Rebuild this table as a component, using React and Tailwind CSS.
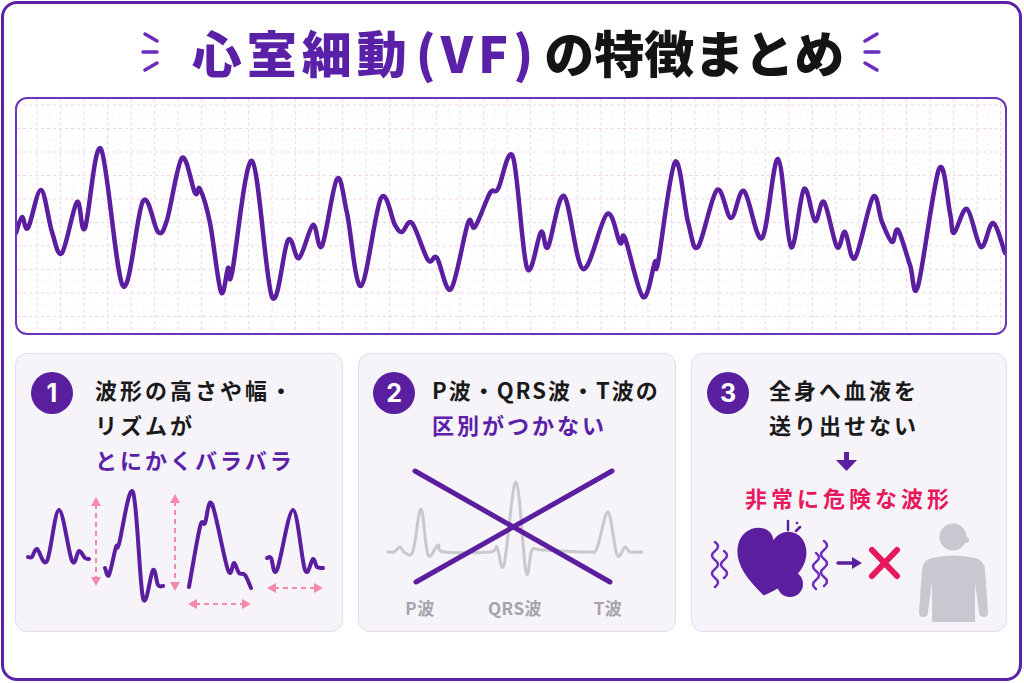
import React from "react";

const PINK = "#f28bab";
const RED = "#e8185c";

function smooth(pts, k = 1) {
  let d = `M${pts[0][0]},${pts[0][1]}`;
  for (let i = 0; i < pts.length - 1; i++) {
    const p0 = pts[i - 1] || pts[i];
    const p1 = pts[i];
    const p2 = pts[i + 1];
    const p3 = pts[i + 2] || p2;
    const c1x = p1[0] + ((p2[0] - p0[0]) / 6) * k;
    const c1y = p1[1] + ((p2[1] - p0[1]) / 6) * k;
    const c2x = p2[0] - ((p3[0] - p1[0]) / 6) * k;
    const c2y = p2[1] - ((p3[1] - p1[1]) / 6) * k;
    d += ` C${c1x.toFixed(1)},${c1y.toFixed(1)} ${c2x.toFixed(1)},${c2y.toFixed(1)} ${p2[0]},${p2[1]}`;
  }
  return d;
}

const ECG = [
  [16, 233], [22, 217], [28, 228], [41, 190], [52, 232], [62, 253], [77, 202], [85, 228], [101, 149], [123, 286],
  [143, 201], [158, 232], [167, 220], [182, 158], [195, 193], [200, 189], [210, 223], [221, 292], [228, 268], [232, 273],
  [252, 161], [272, 297], [288, 240], [299, 258], [313, 225], [322, 246], [337, 179], [347, 213], [361, 286], [381, 198],
  [395, 225], [402, 232], [412, 223], [428, 260], [437, 258], [451, 289], [468, 223], [475, 227], [490, 193], [498, 189],
  [513, 157], [527, 268], [541, 232], [548, 247], [564, 196], [583, 269], [607, 214], [620, 243], [625, 238], [643, 297],
  [655, 262], [658, 263], [675, 162], [688, 222], [698, 247], [717, 190], [731, 218], [744, 191], [762, 238], [778, 159],
  [791, 247], [804, 189], [815, 221], [824, 202], [837, 247], [845, 232], [855, 258], [873, 197], [882, 222], [892, 242],
  [898, 230], [910, 265], [918, 286], [939, 169], [950, 213], [954, 233], [967, 209], [981, 247], [993, 223], [1005, 253],
];

const W1 = [[28, 557], [32, 557], [37, 549], [47, 561], [59, 510], [72, 561], [79, 551], [85, 558], [89, 559]];
const W2 = [[105, 568], [109, 575], [116, 547], [119, 544], [133, 492], [143, 598], [153, 570], [158, 585], [163, 586]];
const W3 = [[189, 587], [200, 527], [205, 523], [212, 504], [228, 570], [234, 563], [239, 573], [245, 575], [251, 588]];
const W4 = [[267, 558], [271, 558], [277, 570], [293, 510], [305, 570], [313, 559], [317, 567], [323, 568]];

const GRAY = [
  [388, 552], [394, 552], [400, 547], [405, 553], [413, 551], [421, 509], [428, 555], [438, 545], [444, 552], [490, 552],
  [497, 547], [504, 565], [516, 482], [526, 572], [532, 550], [542, 550], [588, 552], [597, 548], [608, 512], [617, 555],
  [625, 547], [630, 552], [642, 552],
];

function Sparkle({ flip }) {
  return (
    <svg width="22" height="46" viewBox="0 0 22 46" className={flip ? "-scale-x-100" : ""}>
      <g stroke="#6a2cc0" strokeWidth="3.5" strokeLinecap="round" fill="none">
        <line x1="5" y1="5" x2="17" y2="12" />
        <line x1="3" y1="23" x2="17" y2="23" />
        <line x1="5" y1="41" x2="17" y2="34" />
      </g>
    </svg>
  );
}

function EcgChart() {
  const vx = [];
  for (let x = 37; x < 1005; x += 23.5) vx.push(x);
  const hy = [];
  for (let y = 105; y < 333; y += 23.5) hy.push(y);
  return (
    <svg width="988" height="234" viewBox="17 99 988 234" className="block">
      <g stroke="#f3d3f2" strokeWidth="1" strokeDasharray="3 3">
        {vx.map((x) => (
          <line key={"v" + x} x1={x} y1="99" x2={x} y2="333" />
        ))}
        {hy.map((y) => (
          <line key={"h" + y} x1="17" y1={y} x2="1005" y2={y} />
        ))}
      </g>
      <g stroke="#f8e6f7" strokeWidth="1" strokeDasharray="1 4">
        {vx.map((x) => (
          <line key={"mv" + x} x1={x + 11.75} y1="99" x2={x + 11.75} y2="333" />
        ))}
        {hy.map((y) => (
          <line key={"mh" + y} x1="17" y1={y + 11.75} x2="1005" y2={y + 11.75} />
        ))}
      </g>
      <path d={smooth(ECG)} fill="none" stroke="#5a1e9f" strokeWidth="4.5" strokeLinejoin="round" strokeLinecap="round" />
    </svg>
  );
}

function NumCircle({ n }) {
  return (
    <div className="w-[42px] h-[42px] shrink-0 rounded-full bg-[#5a1f9f] flex items-center justify-center text-white text-[25px] font-bold font-['Inter',sans-serif] leading-none">
      {n}
    </div>
  );
}

function VArrow({ x, y1, y2 }) {
  return (
    <g>
      <line x1={x} y1={y1 + 7} x2={x} y2={y2 - 7} stroke={PINK} strokeWidth="2" strokeDasharray="5 4" />
      <polygon points={`${x - 5},${y1 + 9} ${x + 5},${y1 + 9} ${x},${y1}`} fill={PINK} />
      <polygon points={`${x - 5},${y2 - 9} ${x + 5},${y2 - 9} ${x},${y2}`} fill={PINK} />
    </g>
  );
}

function HArrow({ y, x1, x2 }) {
  return (
    <g>
      <line x1={x1 + 7} y1={y} x2={x2 - 7} y2={y} stroke={PINK} strokeWidth="2" strokeDasharray="5 4" />
      <polygon points={`${x1 + 9},${y - 5} ${x1 + 9},${y + 5} ${x1},${y}`} fill={PINK} />
      <polygon points={`${x2 - 9},${y - 5} ${x2 - 9},${y + 5} ${x2},${y}`} fill={PINK} />
    </g>
  );
}

function Wavy({ x, y1, y2 }) {
  let d = `M${x},${y1} q6,4.5 0,9`;
  for (let y = y1 + 9; y + 9 <= y2; y += 9) d += " t0,9";
  return <path d={d} fill="none" stroke="#6a2cc0" strokeWidth="2.5" strokeLinecap="round" />;
}

export default function App() {
  const font = "font-['Noto_Sans_CJK_JP','Noto_Sans',sans-serif]";
  return (
    <div className={`w-[1024px] h-[683px] bg-white pt-[1px] pl-[1px] pr-[2px] pb-[2px] ${font}`}>
      <div className="w-full h-full border-[3px] border-[#5c22a8] rounded-[16px] flex flex-col pl-[11px] pr-[12px]">
        {/* Title */}
        <div className="h-[93px] flex items-center justify-center">
          <div className="mr-[30px] mt-[2px]">
            <Sparkle />
          </div>
          <h1 className="text-[50px] font-black leading-none flex items-baseline">
            <span className="text-[#5b20a8] tracking-[5px] mr-[4px]">心室細動</span>
            <span className="text-[#5b20a8] tracking-[5px] mr-[6px]">(VF)</span>
            <span className="text-[#141414]">の特徴まとめ</span>
          </h1>
          <div className="ml-[16px] mt-[2px]">
            <Sparkle flip />
          </div>
        </div>

        {/* ECG */}
        <div className="h-[238px] border-2 border-[#6b36b8] rounded-[12px] overflow-hidden bg-white">
          <EcgChart />
        </div>

        {/* Cards */}
        <div className="mt-[18px] h-[279px] flex gap-[15px]">
          {/* Card 1 */}
          <div className="w-[328px] h-full rounded-[12px] border border-[#e4daf1] bg-[#f6f3f9] flex flex-col overflow-hidden">
            <div className="flex gap-[22px] pl-[15px] pt-[18px]">
              <NumCircle n="1" />
              <div className="text-[22px] font-bold leading-[35px] tracking-[3px] text-[#1a1a1a]">
                <div>波形の高さや幅・</div>
                <div>リズムが</div>
                <div className="text-[#5b20a8]">とにかくバラバラ</div>
              </div>
            </div>
            <svg width="326" height="154" viewBox="16 477 326 154" className="block">
              <VArrow x={96} y1={497} y2={586} />
              <VArrow x={175} y1={494} y2={591} />
              <HArrow y={604} x1={188} x2={251} />
              <HArrow y={588} x1={267} x2={323} />
              {[W1, W2, W3, W4].map((w, i) => (
                <path key={i} d={smooth(w)} fill="none" stroke="#5a1e9f" strokeWidth="4" strokeLinejoin="round" strokeLinecap="round" />
              ))}
            </svg>
          </div>

          {/* Card 2 */}
          <div className="w-[318px] h-full rounded-[12px] border border-[#e4daf1] bg-[#f6f3f9] flex flex-col overflow-hidden">
            <div className="flex gap-[17px] pl-[14px] pt-[18px]">
              <NumCircle n="2" />
              <div className="text-[22px] font-bold leading-[35px] tracking-[2px] text-[#1a1a1a] whitespace-nowrap">
                <div>P波・QRS波・T波の</div>
                <div className="text-[#5b20a8] tracking-[3px]">区別がつかない</div>
              </div>
            </div>
            <svg width="316" height="154" viewBox="359 442 316 154" className="block">
              <path d={smooth(GRAY)} fill="none" stroke="#c9c8cc" strokeWidth="3" strokeLinejoin="round" strokeLinecap="round" />
              <line x1="415" y1="471" x2="610" y2="582" stroke="#5a1e9f" strokeWidth="5" strokeLinecap="round" />
              <line x1="416" y1="582" x2="612" y2="471" stroke="#5a1e9f" strokeWidth="5" strokeLinecap="round" />
            </svg>
            <div className="flex text-[17px] font-bold leading-[24px] text-[#a5a4ab] tracking-[0.5px]">
              <span className="w-[60px] ml-[31px] text-center">P波</span>
              <span className="w-[80px] ml-[25px] text-center">QRS波</span>
              <span className="w-[60px] ml-[23px] text-center">T波</span>
            </div>
          </div>

          {/* Card 3 */}
          <div className="w-[316px] h-full rounded-[12px] border border-[#e4daf1] bg-[#f6f3f9] flex flex-col overflow-hidden">
            <div className="flex gap-[20px] pl-[15px] pt-[18px]">
              <NumCircle n="3" />
              <div className="text-[22px] font-bold leading-[35px] tracking-[3px] text-[#1a1a1a]">
                <div>全身へ血液を</div>
                <div>送り出せない</div>
              </div>
            </div>
            <svg width="314" height="30" viewBox="692 442 314 30" className="block">
              <rect x="844" y="452" width="5" height="10" fill="#5a1e9f" />
              <polygon points="836,460 857,460 846.5,471" fill="#5a1e9f" />
            </svg>
            <div className="mt-[10px] text-center text-[22px] font-bold leading-[30px] tracking-[4px] text-[#e8185c]">
              非常に危険な波形
            </div>
            <svg width="314" height="119" viewBox="692 512 314 119" className="block">
              <Wavy x={715} y1={542} y2={592} />
              <Wavy x={724} y1={551} y2={580} />
              <Wavy x={816} y1={553} y2={590} />
              <Wavy x={824} y1={541} y2={592} />
              <g transform="rotate(10 770 560)">
                <path
                  d="M770 596 C746 580 735 566 736 550 C737 535 751 527 762 531 C767 533 769 537 770 540 C772 535 777 530 783 529 C796 527 805 538 805 551 C805 568 792 581 770 596 Z"
                  fill="#5a1e9f"
                />
              </g>
              <circle cx="790" cy="584" r="13" fill="#5a1e9f" />
              <line x1="788" y1="521" x2="788" y2="530" stroke="#5a1e9f" strokeWidth="2.5" strokeLinecap="round" />
              <line x1="796" y1="531" x2="800" y2="527" stroke="#5a1e9f" strokeWidth="2.5" strokeLinecap="round" />
              <circle cx="797" cy="523" r="1.3" fill="#5a1e9f" />
              <line x1="838" y1="563" x2="854" y2="563" stroke="#5a1e9f" strokeWidth="3.5" strokeLinecap="round" />
              <polygon points="852,557 862,563 852,569" fill="#5a1e9f" />
              <g stroke={RED} strokeWidth="6" strokeLinecap="round">
                <line x1="872" y1="550" x2="897" y2="576" />
                <line x1="897" y1="550" x2="872" y2="576" />
              </g>
              <circle cx="953" cy="537" r="13.5" fill="#c9c7cf" />
              <circle cx="966" cy="540" r="3" fill="#c9c7cf" />
              <path
                d="M932 558 Q953 553 975 558 Q984 560 985 570 L988 612 Q988 617 984 617 Q979 617 979 612 L975 582 L975 622 L932 622 L932 582 L928 612 Q928 617 923 617 Q919 617 919 612 L922 570 Q923 560 932 558 Z"
                fill="#c9c7cf"
              />
            </svg>
          </div>
        </div>
      </div>
    </div>
  );
}
